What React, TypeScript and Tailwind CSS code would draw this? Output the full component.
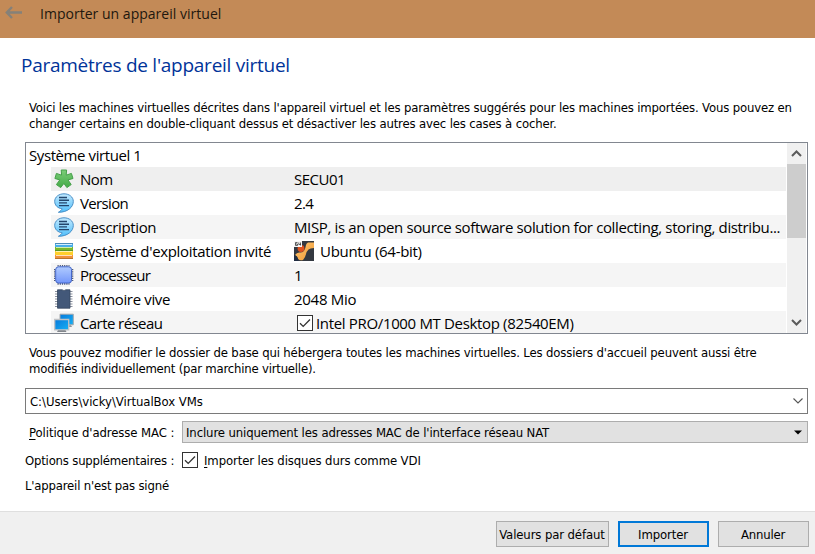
import type { ReactNode } from "react";

const small = "font-['DejaVu_Sans_Condensed','DejaVu_Sans',sans-serif] text-[13px] leading-4 whitespace-pre [font-stretch:condensed]";

function GearIcon() {
  return (
    <svg width="20" height="20" viewBox="0 0 20 20">
      <defs>
        <linearGradient id="green" gradientUnits="userSpaceOnUse" x1="0" y1="0" x2="0" y2="20">
          <stop offset="0" stopColor="#7fcf7c" />
          <stop offset="1" stopColor="#3fa843" />
        </linearGradient>
      </defs>
      <path d="M7.2 1H12.6L12.2 6.2L17.4 4.4L19 9.5L14 10.9L17.2 15.6L12.9 18.6L9.9 14.4L6.7 18.6L2.4 15.6L5.8 10.9L.9 9.5L2.4 4.4L7.6 6.2Z" fill="url(#green)" stroke="#45a04a" strokeWidth="1" strokeLinejoin="round" />
    </svg>
  );
}

function BubbleIcon() {
  return (
    <svg width="20" height="20" viewBox="0 0 20 20">
      <defs>
        <linearGradient id="bubble" x1="0" y1="0" x2="0" y2="1">
          <stop offset="0" stopColor="#c4eaff" />
          <stop offset="1" stopColor="#4fbefa" />
        </linearGradient>
      </defs>
      <path d="M10 .8C15.2.8 19.3 4 19.3 8.4C19.3 14 14 19.3 4.4 19.3C6.5 18 7.7 16.9 8.1 15.8C3.7 15.3.7 12.2.7 8.4C.7 4 4.8.8 10 .8Z" fill="url(#bubble)" stroke="#4a8fc6" strokeWidth="1" />
      <path d="M5 4.5h8M5 7.2h10M5 9.9h8M5 12.6h10" stroke="#24466c" strokeWidth="1.4" />
    </svg>
  );
}

function BarsIcon() {
  return (
    <svg width="20" height="20" viewBox="0 0 20 20" shapeRendering="crispEdges">
      <rect x="1" y="2" width="18" height="4" fill="#4aaeea" />
      <rect x="1" y="6" width="18" height="4" fill="#78b82c" />
      <rect x="1" y="10" width="18" height="4" fill="#ffd02c" />
      <rect x="1" y="14" width="18" height="4" fill="#f0913a" />
      <rect x="2" y="3" width="16" height="1" fill="#d4efff" />
      <rect x="2" y="6" width="16" height="1" fill="#d3edac" />
      <rect x="2" y="10" width="16" height="1" fill="#fff2b1" />
      <rect x="2" y="14" width="16" height="1" fill="#ffe0bd" />
      <rect x="1" y="2" width="18" height="1" fill="#4c8cba" />
      <rect x="1" y="9" width="18" height="1" fill="#5c9625" />
      <rect x="1" y="17" width="18" height="1" fill="#b9732c" />
    </svg>
  );
}

function ChipIcon() {
  return (
    <svg width="20" height="20" viewBox="0 0 20 20">
      <defs>
        <linearGradient id="chip" x1="0" y1="0" x2="0" y2="1">
          <stop offset="0" stopColor="#b0cbff" />
          <stop offset="1" stopColor="#7396fa" />
        </linearGradient>
      </defs>
      <path d="M3.5 .8h12M3.5 18.9h12M.8 4v12M18.5 4v12" fill="none" stroke="#4f5a78" strokeWidth="1.6" strokeDasharray="1.2 1" />
      <rect x="1.7" y="1.8" width="15.8" height="16.2" rx="2.8" fill="url(#chip)" stroke="#4467c9" />
    </svg>
  );
}

function MemoryIcon() {
  return (
    <svg width="20" height="20" viewBox="0 0 20 20">
      <path d="M1 2.5h17.5M1 5h17.5M1 7.5h17.5M1 10h17.5M1 12.5h17.5M1 15h17.5M1 17.5h17.5" stroke="#8a909d" strokeWidth="1.2" />
      <path d="M3.5 .8h4.7Q10 2.5 11.8.8H16v18.4H3.5Z" fill="#435879" stroke="#35465f" strokeWidth=".8" />
    </svg>
  );
}

function NetworkIcon() {
  return (
    <svg width="20" height="20" viewBox="0 0 20 20">
      <defs>
        <linearGradient id="screen" x1="0" y1="0" x2="1" y2="1">
          <stop offset="0" stopColor="#0879db" />
          <stop offset="1" stopColor="#16b0f4" />
        </linearGradient>
      </defs>
      <path d="M6 1.2H19.3v10.6H6Z" fill="url(#screen)" stroke="#a5a8ac" />
      <path d="M14 12.3h3l1 1.7h-4Z" fill="#8d9298" />
      <path d="M.7 6.5h14v10.3H.7Z" fill="url(#screen)" stroke="#c0c2c5" strokeWidth="1.3" />
      <path d="M4 17.3h7.5l1 1.7H3Z" fill="#81868c" />
    </svg>
  );
}

function SystemIcon() {
  return (
    <svg width="20" height="20" viewBox="0 0 20 20">
      <defs>
        <linearGradient id="orange" x1="0" y1="0" x2="1" y2="1">
          <stop offset="0" stopColor="#ffc779" />
          <stop offset="1" stopColor="#f09a2f" />
        </linearGradient>
      </defs>
      <rect width="20" height="20" fill="#343941" />
      <circle cx="7" cy="7.5" r="3.4" fill="#e0521f" />
      <path d="M14 1.5H20V7Q16 7 14.5 8.5Q12.5 10.5 12 13Q11.5 16 9 19Q6 20 4 18Q3.7 15 1 14Q3 11 6 11.5Q9 12 10.5 9Q11.5 7 12 4Q12.5 2 14 1.5Z" fill="url(#orange)" />
      <path d="M0 14Q4 15 4.5 20H0Z" fill="#202d42" />
      <rect width="8" height="6" fill="#f5f5f5" />
      <path d="M3.5 1.5h-2v3h2v-1.5h-2M4.8 1.5v2h2M6.5 1.5v3" fill="none" stroke="#3c3c3c" strokeWidth=".8" />
    </svg>
  );
}

function Check() {
  return (
    <span className="block h-4 w-4 shrink-0 border border-[#333] bg-white">
      <svg width="14" height="14" viewBox="0 0 14 14">
        <path d="M2 7.2L5.2 10.4L12 3.5" fill="none" stroke="#333" strokeWidth="1.3" />
      </svg>
    </span>
  );
}

function Row({ icon, name, bg, nameClass, children }: { icon: ReactNode; name: string; bg: string; nameClass: string; children: ReactNode }) {
  return (
    <div className={`ml-[25px] flex h-6 shrink-0 items-center ${bg}`}>
      <div className="flex w-[243px] shrink-0 items-center pl-[3px]">
        {icon}
        <span className={`ml-1.5 ${nameClass}`}>{name}</span>
      </div>
      {children}
    </div>
  );
}

export default function App() {
  return (
    <div className="flex h-[554px] w-[815px] flex-col overflow-hidden bg-white text-black">
      <header className="flex h-[38px] shrink-0 items-start bg-[#c38a57] pl-[5px]">
        <svg className="mt-1" width="18" height="18" viewBox="0 0 18 18">
          <path d="M7 3L1.8 8.5L7 14M2 8.5h15" fill="none" stroke="#858179" strokeWidth="2.4" />
        </svg>
        <span className="ml-[17px] mt-1 font-['Open_Sans',sans-serif] text-[14px] leading-5 tracking-[0.02px] whitespace-pre text-[#21170e]">Importer un appareil virtuel</span>
      </header>
      <main className="flex h-[473px] shrink-0 flex-col">
        <h1 className="ml-[21px] mt-[14px] h-[26px] font-['Open_Sans',sans-serif] text-[19px] leading-[26px] tracking-[-0.26px] whitespace-pre text-[#003399]"><span>Paramètres de l'appareil virtuel</span></h1>
        <p className={`ml-[29px] mt-[22px] flex h-8 flex-col items-start tracking-[-0.155px] ${small}`}>
          <span>Voici les machines virtuelles décrites dans l'appareil virtuel et les paramètres suggérés pour les machines importées. Vous pouvez en</span>
          <span>changer certains en double-cliquant dessus et désactiver les autres avec les cases à cocher.</span>
        </p>
        <section className="ml-[25px] mt-[10px] flex h-[192px] w-[783px] shrink-0 border border-[#828790] font-['Open_Sans',sans-serif] text-[15px] whitespace-pre">
          <div className="flex w-[760px] flex-col overflow-hidden">
            <div className="h-6 shrink-0 pl-[3px] leading-6 tracking-[-0.41px]"><span>Système virtuel 1</span></div>
            <Row icon={<GearIcon />} name="Nom" bg="bg-[#efefef]" nameClass="tracking-[-0.5px]"><span className="tracking-[-0.5px]">SECU01</span></Row>
            <Row icon={<BubbleIcon />} name="Version" bg="bg-white" nameClass="tracking-[-0.65px]"><span className="tracking-[-0.6px]">2.4</span></Row>
            <Row icon={<BubbleIcon />} name="Description" bg="bg-[#f5f5f5]" nameClass="tracking-[-0.36px]"><span className="tracking-[-0.37px]">MISP, is an open source software solution for collecting, storing, distribu...</span></Row>
            <Row icon={<BarsIcon />} name="Système d'exploitation invité" bg="bg-white" nameClass="tracking-[-0.32px]"><SystemIcon /><span className="ml-1.5 tracking-[-0.29px]">Ubuntu (64-bit)</span></Row>
            <Row icon={<ChipIcon />} name="Processeur" bg="bg-[#f5f5f5]" nameClass="tracking-[-0.78px]"><span>1</span></Row>
            <Row icon={<MemoryIcon />} name="Mémoire vive" bg="bg-white" nameClass="tracking-[-0.35px]"><span className="tracking-[-0.27px]">2048 Mio</span></Row>
            <Row icon={<NetworkIcon />} name="Carte réseau" bg="bg-[#f5f5f5]" nameClass="tracking-[-0.58px]"><span className="ml-[3px]"><Check /></span><span className="ml-[3px] tracking-[-0.34px]">Intel PRO/1000 MT Desktop (82540EM)</span></Row>
          </div>
          <div className="ml-px flex w-[19px] flex-col bg-[#f0f0f0]">
            <svg className="shrink-0" width="19" height="21" viewBox="0 0 19 21"><path d="M5 13L9.5 8.5L14 13" fill="none" stroke="#5b5b5b" strokeWidth="2" /></svg>
            <div className="h-[74px] bg-[#cdcdcd]" />
            <svg className="mt-auto shrink-0" width="19" height="21" viewBox="0 0 19 21"><path d="M5 8L9.5 12.5L14 8" fill="none" stroke="#5b5b5b" strokeWidth="2" /></svg>
          </div>
        </section>
        <p className={`ml-[29px] mt-[11px] flex h-8 shrink-0 flex-col items-start ${small}`}>
          <span className="tracking-[-0.157px]">Vous pouvez modifier le dossier de base qui hébergera toutes les machines virtuelles. Les dossiers d'accueil peuvent aussi être</span>
          <span className="tracking-[-0.21px]">modifiés individuellement (par marchine virtuelle).</span>
        </p>
        <div className={`ml-[25px] mt-[11px] flex h-[26px] w-[783px] shrink-0 items-center justify-between border border-[#7a7a7a] pl-1 pr-[3px] ${small}`}>
          <span className="pt-0.5 tracking-[-0.05px]">C:\Users\vicky\VirtualBox VMs</span>
          <svg width="12" height="8" viewBox="0 0 12 8"><path d="M1.5 1.5L6 6L10.5 1.5" fill="none" stroke="#555" strokeWidth="1.1" /></svg>
        </div>
        <div className={`mt-[7px] flex h-[22px] shrink-0 items-center ${small}`}>
          <div className="w-[182px] shrink-0 pl-[29px] pt-0.5 tracking-[-0.09px]"><span><u className="underline underline-offset-2">P</u>olitique d'adresse MAC :</span></div>
          <div className="flex h-[22px] w-[626px] items-center justify-between border border-[#adadad] bg-[#e1e1e1] pl-[3px] pr-[5px]">
            <span className="pt-0.5 tracking-[-0.115px]">Inclure uniquement les adresses MAC de l'interface réseau NAT</span>
            <svg width="8" height="5" viewBox="0 0 8 5"><path d="M0 .5h8L4 4.5Z" /></svg>
          </div>
        </div>
        <div className={`mt-[9px] flex h-4 shrink-0 items-center ${small}`}>
          <div className="w-[182px] shrink-0 pl-[25px] pt-0.5 tracking-[-0.2px]"><span>Options supplémentaires :</span></div>
          <Check />
          <span className="ml-1.5 pt-0.5 tracking-[-0.11px]"><u className="underline underline-offset-2">I</u>mporter les disques durs comme VDI</span>
        </div>
        <div className={`ml-[25px] mt-[10px] tracking-[-0.19px] ${small}`}><span>L'appareil n'est pas signé</span></div>
      </main>
      <footer className={`flex h-[43px] shrink-0 items-start border-t border-[#dfdfdf] bg-[#f0f0f0] pl-[496px] pt-[9px] ${small}`}>
        <button className="flex h-[26px] w-[113px] items-center justify-center border border-[#adadad] bg-[#e1e1e1]"><span className="pr-px pt-0.5 tracking-[-0.12px]">Valeurs par défaut</span></button>
        <button className="ml-[9px] flex h-[26px] w-[91px] items-center justify-center border-2 border-[#0078d7] bg-[#e1e1e1]"><span className="pr-px pt-0.5 tracking-[-0.12px]">Importer</span></button>
        <button className="ml-[9px] flex h-[26px] w-[91px] items-center justify-center border border-[#adadad] bg-[#e1e1e1]"><span className="pr-px pt-0.5 tracking-[-0.2px]">Annuler</span></button>
      </footer>
    </div>
  );
}
